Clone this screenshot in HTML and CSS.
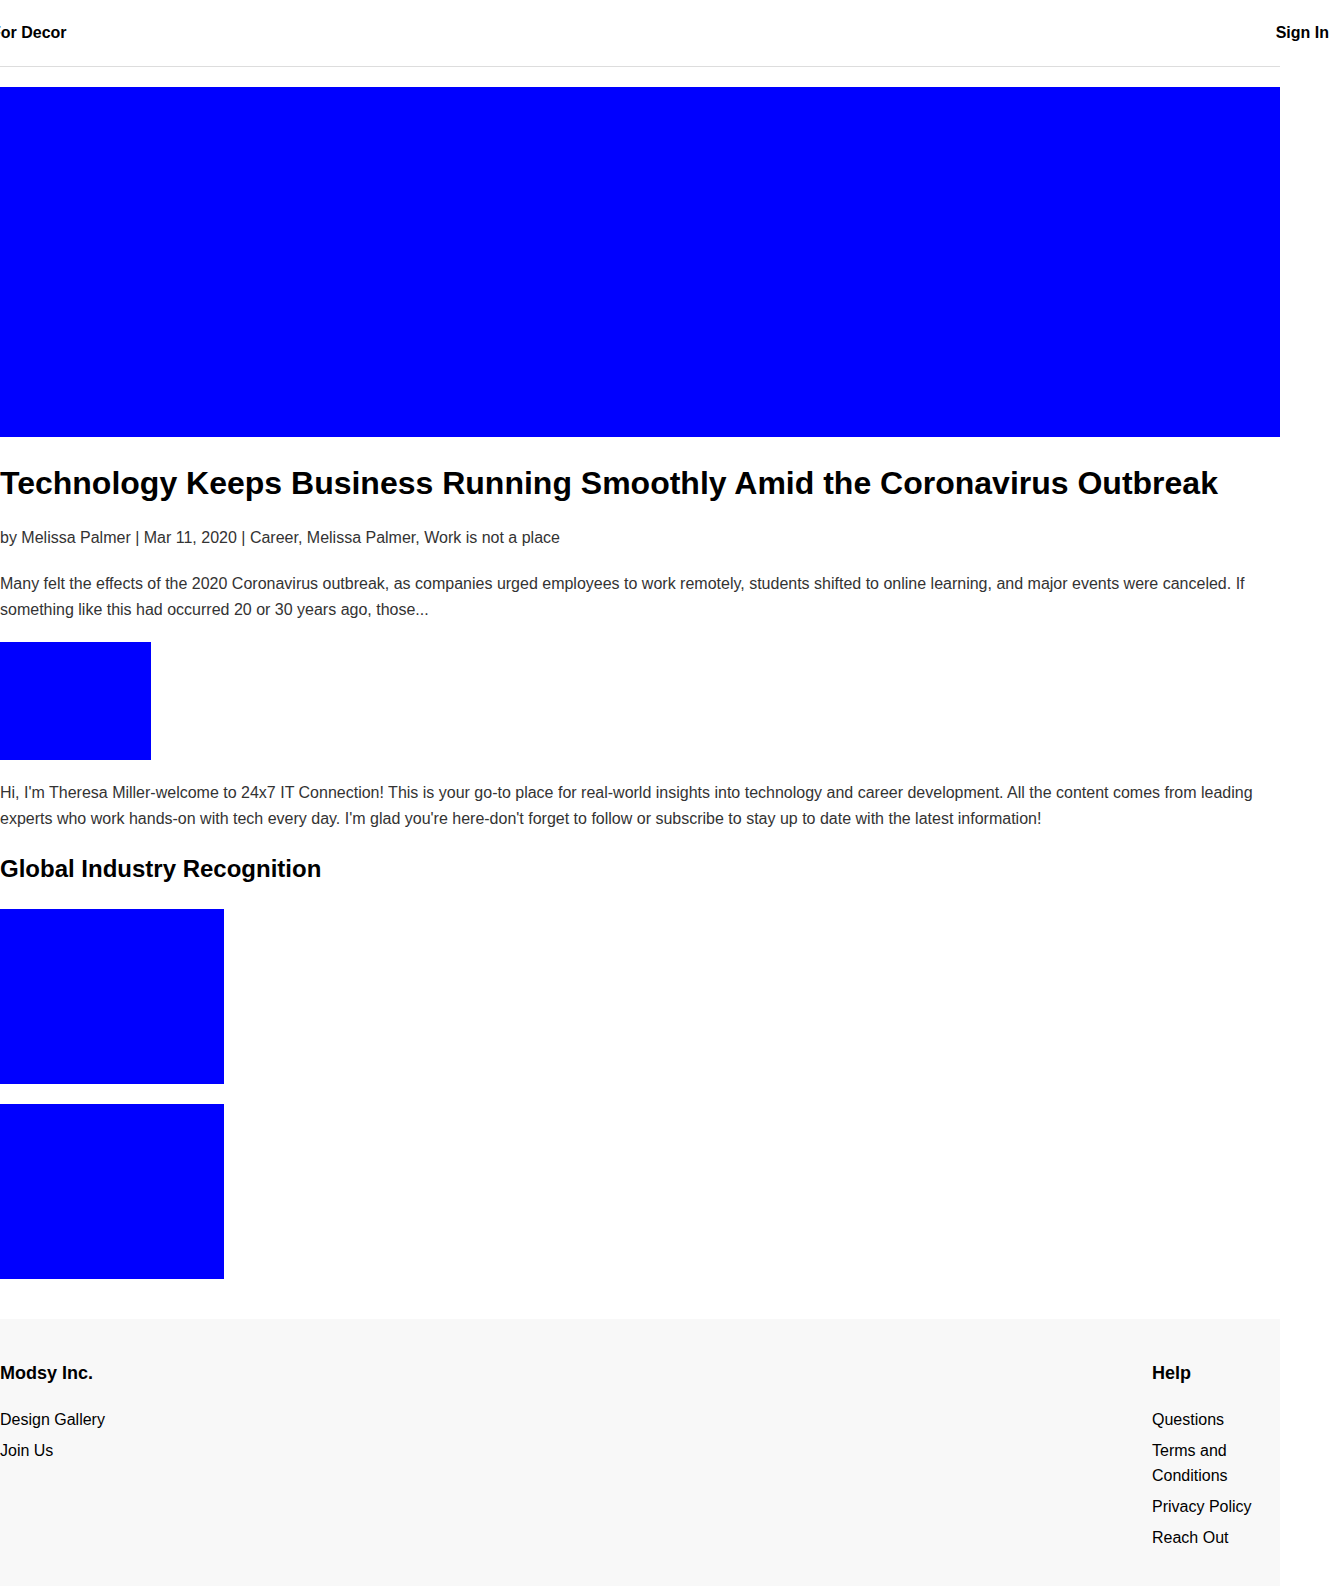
FILE: index.html
```html
<!DOCTYPE html>
<html lang="en">
<head>
<meta charset="utf-8">
<title>Technology Keeps Business Running Smoothly Amid the Coronavirus Outbreak</title>
<link rel="stylesheet" href="styles.css">
</head>
<body>
<div class="page">
  <header class="site-header">
    <a class="brand" href="#">For Decor</a>
    <a class="signin" href="#">Sign In</a>
  </header>

  <main class="article">
    <div class="hero"></div>
    <h1 class="title">Technology Keeps Business Running Smoothly Amid the Coronavirus Outbreak</h1>
    <p class="meta">by Melissa Palmer | Mar 11, 2020 | Career, Melissa Palmer, Work is not a place</p>
    <p class="excerpt">Many felt the effects of the 2020 Coronavirus outbreak, as companies urged employees to work remotely, students shifted to online learning, and major events were canceled. If something like this had occurred 20 or 30 years ago, those...</p>
    <div class="thumb"></div>
    <p class="intro">Hi, I'm Theresa Miller-welcome to 24x7 IT Connection! This is your go-to place for real-world insights into technology and career development. All the content comes from leading experts who work hands-on with tech every day. I'm glad you're here-don't forget to follow or subscribe to stay up to date with the latest information!</p>
    <h2 class="section-title">Global Industry Recognition</h2>
    <div class="awards">
      <div class="award"></div>
      <div class="award"></div>
    </div>
  </main>

  <footer class="site-footer">
    <div class="footer-col">
      <h3 class="footer-title">Modsy Inc.</h3>
      <ul class="footer-links">
        <li><a href="#">Design Gallery</a></li>
        <li><a href="#">Join Us</a></li>
      </ul>
    </div>
    <div class="footer-col footer-col-help">
      <h3 class="footer-title">Help</h3>
      <ul class="footer-links">
        <li><a href="#">Questions</a></li>
        <li><a href="#">Terms and Conditions</a></li>
        <li><a href="#">Privacy Policy</a></li>
        <li><a href="#">Reach Out</a></li>
      </ul>
    </div>
  </footer>
</div>
</body>
</html>
```

FILE: styles.css
```css
html, body {
  margin: 0;
  padding: 0;
  background: #ffffff;
}

body {
  font-family: "Liberation Sans", Arial, Helvetica, sans-serif;
  font-size: 16px;
  line-height: 1.6;
  color: #333333;
}

a {
  color: inherit;
  text-decoration: none;
}

.page {
  width: 1280px;
}

/* Header */
.site-header {
  height: 64px;
  padding: 1px 0 1px;
  border-bottom: 1px solid #dddddd;
  display: flex;
  align-items: center;
  justify-content: space-between;
}

.brand,
.signin {
  font-weight: 700;
  font-size: 16px;
  line-height: 18px;
  color: #000000;
  white-space: nowrap;
}

.brand {
  margin-left: -9px;
}

.signin {
  margin-right: -49px;
}

/* Article */
.article {
  display: flex;
  flex-direction: column;
  align-items: flex-start;
}

.hero {
  align-self: stretch;
  height: 350px;
  margin-top: 20px;
  background: #0000ff;
}

.title {
  margin: 27px 0 0;
  font-size: 32px;
  line-height: 38.4px;
  font-weight: 700;
  color: #000000;
}

.meta {
  margin: 23px 0 0;
}

.excerpt {
  margin: 20px 0 0;
}

.thumb {
  width: 151px;
  height: 118px;
  margin-top: 20px;
  background: #0000ff;
}

.intro {
  margin: 20px 0 0;
}

.section-title {
  margin: 24px 0 0;
  font-size: 24px;
  line-height: 28.8px;
  font-weight: 700;
  color: #000000;
}

.awards {
  margin-top: 24.6px;
  display: flex;
  flex-direction: column;
  gap: 20px;
}

.award {
  width: 224px;
  height: 175px;
  background: #0000ff;
}

/* Footer */
.site-footer {
  margin-top: 40px;
  padding: 40px 0 36px;
  background: #f8f8f8;
  display: flex;
  justify-content: space-between;
  align-items: flex-start;
}

.footer-col-help {
  width: 128px;
}

.footer-title {
  margin: 0;
  font-size: 18px;
  line-height: 28.8px;
  font-weight: 700;
  color: #000000;
}

.footer-links {
  list-style: none;
  margin: 19px 0 0;
  padding: 0;
  display: flex;
  flex-direction: column;
  gap: 5.4px;
  color: #000000;
}
```
